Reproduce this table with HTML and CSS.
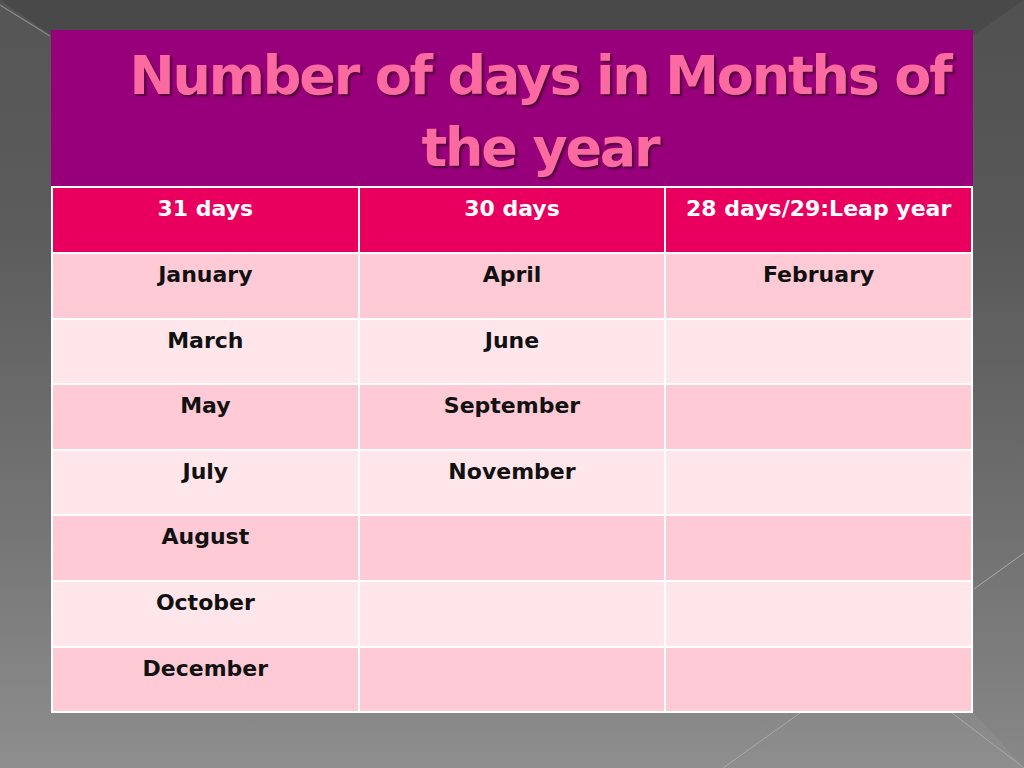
FILE: index.html
```html
<!DOCTYPE html>
<html>
<head>
<meta charset="utf-8">
<link rel="stylesheet" href="styles.css">
</head>
<body>
<svg class="deco" width="1024" height="768" viewBox="0 0 1024 768">
  <polygon points="0,0 1024,0 974,35 50,35" fill="#000" fill-opacity="0.14"/>
  <polygon points="974,35 1024,0 1024,768 974,713" fill="#000" fill-opacity="0.04"/>
  <line x1="0" y1="5" x2="50" y2="36" stroke="#8a8a8a" stroke-width="1.2"/>
  <line x1="974" y1="589" x2="1024" y2="553" stroke="#aaa" stroke-width="1"/>
  <line x1="800" y1="713" x2="723" y2="768" stroke="#aaa" stroke-width="1"/>
  <line x1="952" y1="713" x2="1024" y2="768" stroke="#aaa" stroke-width="1"/>
</svg>
<div class="slide">
  <div class="title">Number of days in Months of the year</div>
  <table class="months">
    <tr class="head"><td>31 days</td><td>30 days</td><td>28 days/29:Leap year</td></tr>
    <tr class="odd"><td>January</td><td>April</td><td>February</td></tr>
    <tr class="even"><td>March</td><td>June</td><td></td></tr>
    <tr class="odd"><td>May</td><td>September</td><td></td></tr>
    <tr class="even"><td>July</td><td>November</td><td></td></tr>
    <tr class="odd"><td>August</td><td></td><td></td></tr>
    <tr class="even"><td>October</td><td></td><td></td></tr>
    <tr class="odd"><td>December</td><td></td><td></td></tr>
  </table>
</div>
</body>
</html>
```
FILE: styles.css
```css
html, body {
  margin: 0;
  padding: 0;
}
body {
  width: 1024px;
  height: 768px;
  overflow: hidden;
  position: relative;
  background: linear-gradient(180deg, #555555 0%, #5c5c5c 30%, #767676 70%, #8e8e8e 100%);
  font-family: "DejaVu Sans", "Liberation Sans", sans-serif;
}
.deco {
  position: absolute;
  left: 0;
  top: 0;
}
.slide {
  position: relative;
  padding: 30px 51px 0 51px;
  display: flex;
  flex-direction: column;
}
.title {
  height: 156px;
  box-sizing: border-box;
  background: #97007a;
  color: #fc6aa2;
  font-family: "DejaVu Sans", sans-serif;
  font-weight: bold;
  font-size: 54px;
  line-height: 72px;
  text-align: center;
  padding: 10px 10px 0 66px;
  text-shadow: 2px 2px 2px #4e0038;
  letter-spacing: -2.2px;
}
.months {
  width: 922px;
  border-collapse: collapse;
  table-layout: fixed;
  font-weight: bold;
  font-size: 22px;
}
.months tr {
  height: 65.6px;
}
.months tr.head {
  height: 66px;
}
.months td {
  border: 2px solid #ffffff;
  padding: 8px 4px 0 4px;
  vertical-align: top;
  text-align: center;
  color: #111;
  line-height: 26px;
}
.months tr.head td {
  background: #e9005f;
  color: #ffffff;
  padding-top: 8px;
}
.months tr.odd td {
  background: #fdcad6;
}
.months tr.even td {
  background: #fee6eb;
}
```
